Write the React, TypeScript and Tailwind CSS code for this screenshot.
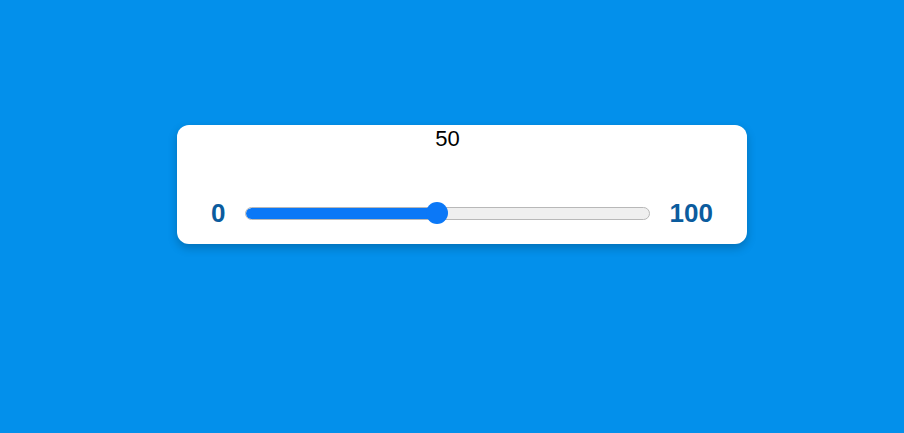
import React from "react";

export default function App() {
  const pct = 47.4;
  return (
    <div
      className="w-[904px] h-[433px] bg-[#0390eb] overflow-hidden pt-[125px] pl-[177px]"
      style={{ fontFamily: '"Liberation Sans", Arial, sans-serif' }}
    >
      <div className="w-[570px] h-[119px] bg-white rounded-[12px] shadow-[0_4px_10px_rgba(0,0,0,0.22)] px-[34px] pt-[1px]">
        <div className="grid grid-cols-[auto_1fr_auto] gap-x-[20px] items-center">
          <div />
          <div className="text-center text-[22px] leading-[25px] text-black">50</div>
          <div />
          <div className="col-span-3 h-[49px]" />
          <div className="text-[26px] leading-[26px] font-bold text-[#0b5c9e]">0</div>
          <div className="relative h-[22px] flex items-center">
            <div className="w-full h-[13px] rounded-full bg-[#efefef] border border-[#b8b8b8] overflow-hidden relative">
              <div
                className="absolute left-0 top-0 bottom-0 bg-[#0b78f7] rounded-full"
                style={{ width: `${pct}%` }}
              />
            </div>
            <div
              className="absolute top-0 w-[22px] h-[22px] rounded-full bg-[#0b78f7] -translate-x-1/2"
              style={{ left: `${pct}%` }}
            />
          </div>
          <div className="text-[26px] leading-[26px] font-bold text-[#0b5c9e]">100</div>
        </div>
      </div>
    </div>
  );
}
